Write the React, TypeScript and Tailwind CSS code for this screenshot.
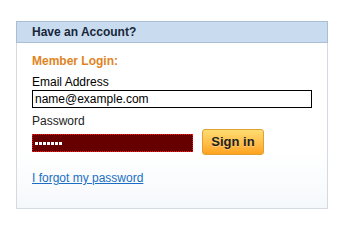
import React from 'react';

export default function App() {
  return (
    <div className="w-[345px] h-[243px] bg-white pt-[21px] pl-[16px] font-['Liberation_Sans',Arial,sans-serif] text-[12px]">
      <div className="w-[312px] h-[188px] border border-[#d3dae2] bg-gradient-to-b from-white from-70% to-[#f5f8fb] flex flex-col">
        <div className="h-[22px] -mt-px -mx-px bg-[#c9dcef] border border-[#a9bfd6] pl-[15px] flex items-center">
          <span className="font-bold text-[#17263a] text-[12px]">Have an Account?</span>
        </div>
        <div className="pl-[15px] pt-[11px] flex flex-col">
          <div className="font-bold text-[#e0841f] leading-[14px]">Member Login:</div>
          <div className="mt-[7px] leading-[14px] text-black">Email Address</div>
          <div className="mt-[1px] w-[280px] h-[18px] border border-black flex items-center pl-[2px] text-black">
            name@example.com
          </div>
          <div className="mt-[6px] leading-[14px] text-[#222]">Password</div>
          <div className="flex items-start gap-[9px] mt-[1px]">
            <div className="mt-[5px] w-[161px] h-[18px] bg-[#660000] border border-dotted border-[#ff1010] flex items-center pl-[2px] gap-[1px]">
              {Array.from({ length: 7 }).map((_, i) => (
                <span key={i} className="w-[3px] h-[3px] bg-white" />
              ))}
            </div>
            <button className="w-[62px] h-[26px] rounded-[3px] border border-[#e0a030] bg-gradient-to-b from-[#ffdd70] to-[#ffa31c] font-bold text-[13px] text-[#1e1e1e] [text-shadow:0_1px_0_rgba(255,255,255,0.3)]">
              Sign in
            </button>
          </div>
          <a href="#" className="mt-[16px] text-[#1a6fc4] underline leading-[14px] w-fit">
            I forgot my password
          </a>
        </div>
      </div>
    </div>
  );
}
